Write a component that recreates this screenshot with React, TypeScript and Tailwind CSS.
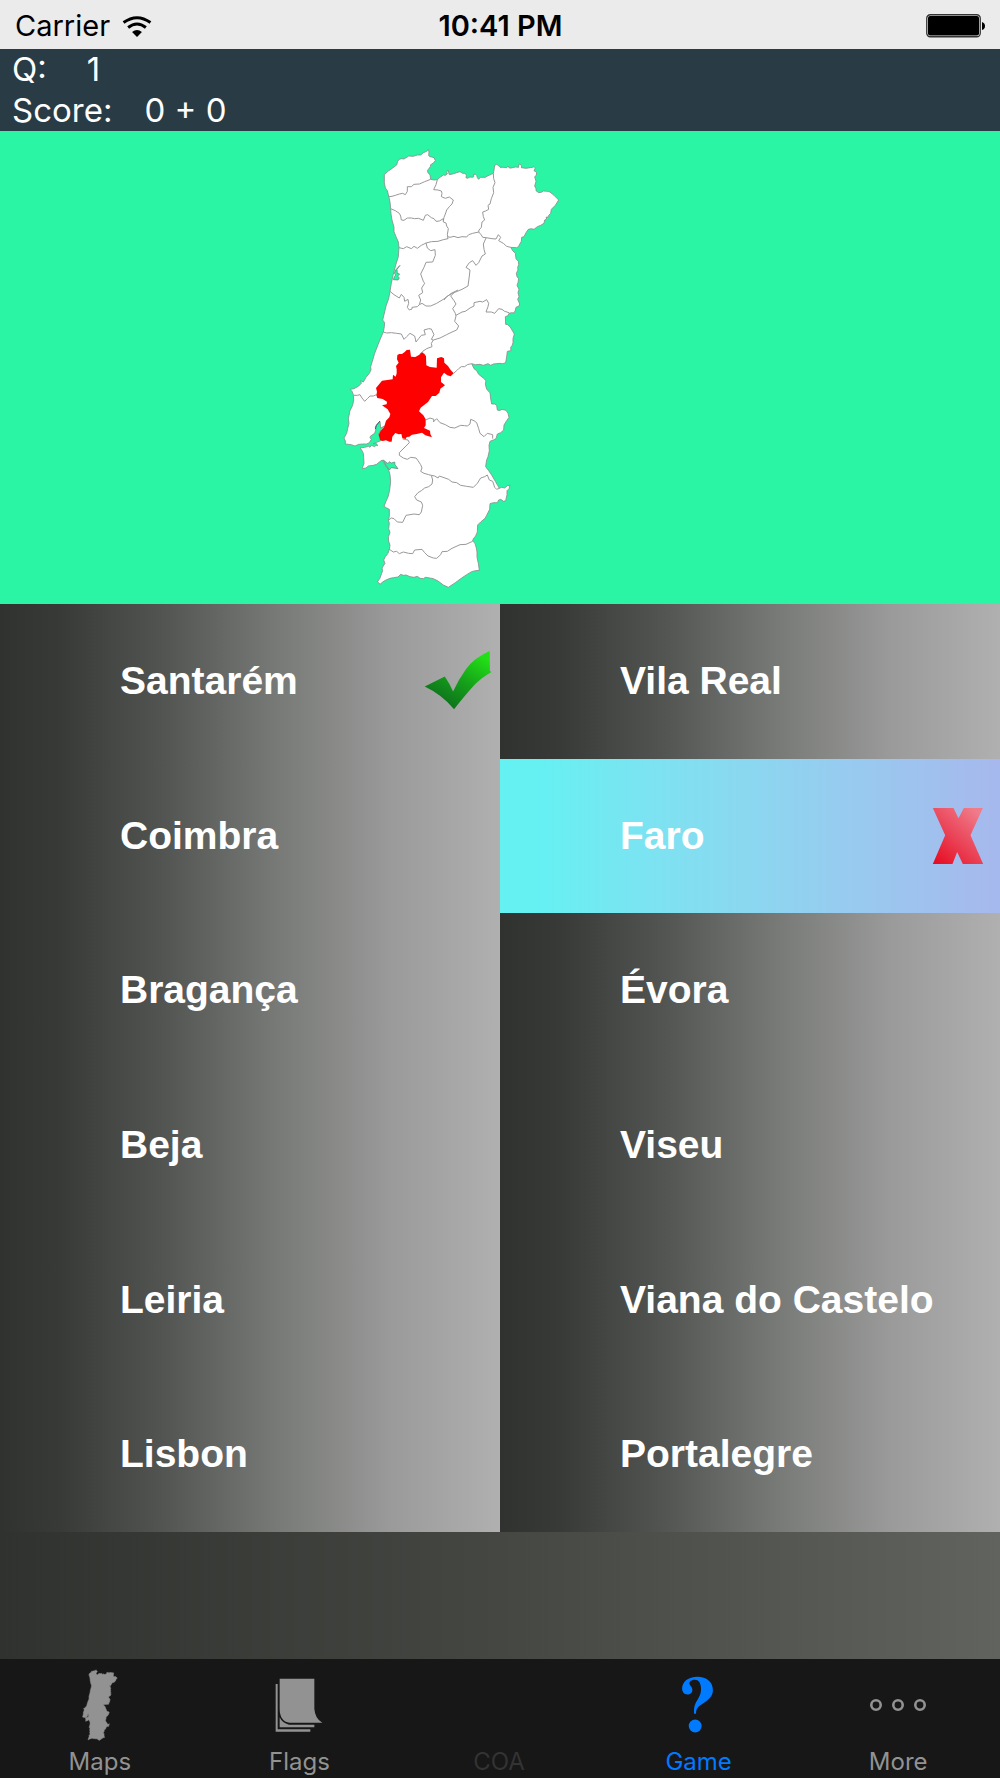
import { useState } from "react";
import clsx from "clsx";

interface Answer {
  name: string;
  mark?: "right" | "wrong";
}

// row by row, left column first
const answers: Answer[] = [
  { name: "Santarém", mark: "right" },
  { name: "Vila Real" },
  { name: "Coimbra" },
  { name: "Faro", mark: "wrong" },
  { name: "Bragança" },
  { name: "Évora" },
  { name: "Beja" },
  { name: "Viseu" },
  { name: "Leiria" },
  { name: "Viana do Castelo" },
  { name: "Lisbon" },
  { name: "Portalegre" },
];

const OUTLINE =
  "M163,104L175,93L188,84L200,75L203,64L208,58L214,56L222,57L236,48L250,49L262,45L272,45L280,38L290,34L295,28L297,36L296,46L299,50L306,51L312,53L316,62L309,70L302,74L301,80L292,92L295,100L300,104L302,118L312,120L322,119L330,112L340,105L346,106L352,102L350,96L354,90L356,98L358,104L368,102L380,98L390,95L398,100L406,100L409,106L408,113L412,115L420,111L428,112L432,109L430,103L437,103L440,106L442,113L446,118L451,112L456,112L466,112L474,107L484,103L490,100L492,90L494,76L500,73L506,77L510,82L522,82L530,83L534,78L538,84L544,84L556,81L566,82L566,74L570,72L575,78L574,83L588,85L600,83L608,82L612,80L616,84L612,92L620,97L619,106L614,110L618,124L614,138L618,146L618,152L626,158L634,157L640,153L652,154L660,156L672,166L686,180L676,196L664,208L662,220L656,226L657,230L648,232L650,237L644,240L642,250L632,256L622,260L612,268L604,266L595,268L588,278L582,290L575,292L574,304L565,320L560,323L542,322L548,332L556,340L558,356L565,364L566,374L563,382L564,390L559,400L561,410L566,416L564,428L561,436L567,448L564,458L567,470L563,478L569,492L567,498L558,502L556,511L552,519L545,518L537,520L534,527L526,530L527,553L533,554L540,560L546,570L553,582L549,596L549,608L546,617L542,622L543,632L532,634L530,650L527,668L518,671L510,670L490,672L482,676L474,671L460,676L450,673L436,674L425,671L432,686L440,692L446,703L460,714L468,722L466,732L470,748L480,758L482,776L485,792L494,792L500,796L502,810L508,812L516,808L528,811L534,820L537,832L530,842L522,855L521,870L512,878L502,882L498,896L490,900L480,904L477,916L478,932L474,950L470,960L468,972L467,980L476,992L485,1005L496,1024L508,1045L515,1042L524,1044L532,1037L540,1036L537,1046L531,1052L531,1064L527,1082L521,1084L512,1078L506,1080L502,1088L490,1088L480,1091L479,1108L470,1126L465,1135L452,1146L443,1155L442,1176L437,1188L430,1196L428,1203L435,1210L439,1224L441,1236L441,1252L445,1270L448,1291L436,1292L425,1295L410,1304L395,1314L376,1328L355,1342L340,1335L324,1323L310,1316L294,1313L286,1312L280,1316L270,1315L262,1309L252,1312L240,1310L228,1305L220,1306L212,1303L204,1311L190,1313L180,1315L166,1321L158,1326L150,1333L146,1328L142,1326L150,1314L155,1300L158,1292L156,1284L165,1270L161,1260L166,1250L174,1240L178,1228L180,1216L176,1204L175,1190L180,1178L176,1166L178,1150L175,1140L178,1130L178,1108L170,1104L162,1099L168,1084L175,1068L179,1050L182,1024L180,1004L176,990L166,976L157,960L148,966L140,973L130,976L115,978L108,984L97,986L99,978L102,970L101,952L100,940L95,930L90,924L104,922L116,919L120,922L124,916L134,920L138,916L143,917L140,911L130,911L140,907L150,903L157,900L146,884L148,878L154,868L164,858L152,864L150,845L142,852L136,862L138,868L134,880L122,888L120,893L124,898L118,908L110,912L98,912L86,913L75,918L64,914L46,912L46,903L42,894L50,880L53,866L57,850L55,836L60,812L68,796L71,780L70,764L66,754L60,748L72,746L86,738L94,730L92,722L100,726L108,712L118,700L123,690L122,680L127,664L134,640L144,614L152,594L160,576L163,560L164,548L158,540L162,524L168,498L176,476L180,454L184,430L190,402L198,372L205,350L207,322L205,306L198,290L192,275L192,262L186,240L183,222L182,205L180,186L176,168L172,152L166,144L163,128Z";

const SANTAREM =
  "M202,645L208,642L216,642L224,636L230,630L240,629L243,650L256,651L268,644L274,637L283,641L288,649L289,676L300,681L320,683L321,655L334,651L342,655L343,668L354,678L362,690L371,700L362,709L352,706L342,698L333,712L333,726L345,736L331,746L328,758L317,768L306,768L294,786L272,803L267,814L280,826L287,838L287,856L282,864L300,872L301,882L306,892L286,886L276,878L260,882L246,884L238,890L230,891L227,897L217,895L214,882L206,883L196,879L187,890L185,905L178,905L168,901L158,903L150,900L146,884L152,872L162,862L168,842L178,832L181,822L173,808L156,796L170,793L171,785L158,777L142,774L139,766L141,755L138,744L156,722L188,718L189,704L197,710L200,700L200,688L198,678L206,668L201,658Z";

const BORDERS = [
  "M176,170L186,169L196,166L208,162L218,160L226,164L232,154L232,140L244,140L252,133L268,132L284,125L302,118",
  "M322,119L318,134L311,149L324,150L334,153L336,160L334,170L346,175L358,171L370,180L366,192L358,200L350,210L346,222L342,232L340,243",
  "M182,206L196,212L208,220L212,228L214,240L222,241L232,234L244,234L254,236L266,235L280,241L286,226L293,224L304,233L312,236L318,244L328,243L340,236L340,246L348,249L350,258L355,266L352,284L354,297",
  "M490,100L491,116L495,128L489,142L491,158L484,176L480,192L474,196L476,208L467,213L458,216L460,230L464,240L456,246L454,262L447,270L446,277",
  "M354,290L360,292L372,289L384,293L396,290L410,291L416,284L428,280L446,276L454,285L458,292L468,293L486,296L498,297L505,284L512,292L506,302L520,310L530,319L542,322",
  "M207,323L220,326L230,320L244,326L252,319L262,325L274,316L288,309L304,305L324,304L340,299L354,296",
  "M288,309L292,324L302,332L315,329L316,346L308,366L288,367L282,382L272,402L280,424L284,430L275,444L278,458L266,466L272,480L268,494",
  "M468,294L460,312L462,328L466,342L456,348L446,368L438,376L428,362L418,368L408,382L420,390L418,408L414,438L396,448L382,454L366,460L350,470L342,480",
  "M180,454L192,464L208,474L214,463L222,472L224,484L234,478L236,490L232,502L238,510L246,507L246,502L262,500L268,494L276,490L288,498L302,498L320,490L340,478L364,460L384,450",
  "M372,458L362,468L372,482L378,492L368,506L376,520L378,528L374,544L386,558L380,570L366,576L350,584L330,594L310,600L304,598L312,584L304,567L296,566L282,570L286,584L274,586L266,596L258,606L254,588L240,580L230,590L222,598L214,582L200,580L184,578L170,579L160,576",
  "M378,526L396,516L406,514L420,504L432,498L432,488L450,484L458,486L470,479L476,490L474,500L468,516L484,516L494,520L506,506L516,508L524,514L537,518",
  "M310,600L304,610L306,620L290,626L278,634L278,640",
  "M371,700L380,692L386,686L394,680L404,680L412,674L425,671",
  "M71,766L82,766L90,764L96,774L104,784L112,776L120,768L130,768L139,764",
  "M287,840L300,834L312,838L310,846L320,836L330,848L346,854L360,862L374,864L392,856L404,857L412,858L420,852L422,838L432,842L440,848L446,866L450,880L462,890L472,880L488,884L488,896",
  "M218,897L234,900L238,908L222,924L208,938L208,946L220,954L232,958L242,952L258,954L264,962L272,974L276,984L272,994L282,1000L296,1004L304,1006L308,1020L306,1032L296,1040L284,1044L274,1052L264,1058L254,1070L260,1080L274,1086L278,1096L274,1116L268,1124L252,1122L228,1126L218,1147L202,1146L192,1136L184,1134L176,1140",
  "M304,1006L314,1008L324,1014L328,1008L342,1013L356,1018L366,1026L380,1028L392,1036L410,1039L430,1042L442,1030L452,1014L464,1010L472,1005L478,1020L488,1024L494,1042L500,1048L508,1045",
  "M178,1228L190,1236L200,1234L208,1241L220,1236L236,1240L248,1241L254,1230L276,1228L284,1238L294,1248L310,1254L320,1255L332,1244L336,1235L352,1234L366,1225L390,1214L408,1213L428,1204",
];

// Aveiro lagoon, then the Sado estuary
const WATER = [
  "M210,376L201,388L202,400L209,402L203,408L208,414L204,420L190,419L193,410L197,405L193,400L197,390Z",
  "M160,960L174,971L178,965L184,969L194,966L195,974L204,986L184,983L178,990L168,976Z",
];

const DistrictMap = () => (
  <svg viewBox="30 18 672 1332" className="h-[444px] w-[224px]" role="img" aria-label="Portugal">
    <path d={OUTLINE} fill="#fff" stroke="#84908a" strokeWidth="2.5" strokeLinejoin="round" />
    <g fill="none" stroke="#999" strokeWidth="3" strokeLinejoin="round">
      {BORDERS.map((d) => (
        <path key={d} d={d} />
      ))}
    </g>
    <path d={SANTAREM} fill="#f00" />
    {WATER.map((d) => (
      <path key={d} d={d} fill="#29f5a5" stroke="#5d7a70" strokeWidth="2" />
    ))}
    <path d="M150,843L139,856L136,868" fill="none" stroke="#456" strokeWidth="3" />
  </svg>
);

const CheckMark = () => (
  <svg viewBox="22 31 204 182" className="h-[60px] w-[68px]" role="img" aria-label="Correct">
    <defs>
      <linearGradient id="check" x1="0.35" y1="1" x2="0.95" y2="0.15">
        <stop offset="0" stopColor="#0c6f1c" />
        <stop offset="0.5" stopColor="#16a01a" />
        <stop offset="1" stopColor="#22e016" />
      </linearGradient>
    </defs>
    <path d="M23,139L84,108Q98,128 109,154Q125,118 148,86Q175,50 220,31L221,92L226,95Q190,114 162,147Q130,184 112,208Q76,164 23,139Z" fill="url(#check)" />
  </svg>
);

const CrossMark = () => (
  <svg viewBox="36 39 153 168" className="h-14 w-[68px]" role="img" aria-label="Wrong">
    <defs>
      <linearGradient id="cross" x1="0" y1="1" x2="0.8" y2="0">
        <stop offset="0" stopColor="#e6081e" />
        <stop offset="0.5" stopColor="#ea4357" />
        <stop offset="1" stopColor="#f07c8a" />
      </linearGradient>
    </defs>
    <path d="M37,39H99L114,70L130,39H187L150,121L188,207H127L110,171L96,207H37L74,121Z" fill="url(#cross)" />
  </svg>
);

const WifiIcon = () => (
  <svg viewBox="0 0 90 64" className="h-[21px] w-[30px]" aria-hidden="true">
    <g fill="none" stroke="#000" strokeWidth="9">
      <path d="M4,20Q45,-10 86,20" />
      <path d="M18,35Q45,14 72,35" />
    </g>
    <path d="M30,49Q45,37 60,49L45,64Z" />
  </svg>
);

const BatteryIcon = () => (
  <svg viewBox="0 0 60 24" className="h-6 w-[60px]" aria-hidden="true">
    <rect x="0.75" y="0.75" width="53.5" height="22" rx="3.5" fill="#ebebeb" stroke="#333" strokeWidth="1.3" />
    <rect x="2" y="2" width="51" height="19.5" rx="2" />
    <path d="M56,8Q59,9 59,12Q59,15 56,16Z" />
  </svg>
);

const MapsIcon = () => (
  <svg viewBox="30 18 672 1332" className="h-18 w-9" aria-hidden="true">
    <path d={OUTLINE} fill="currentColor" stroke="currentColor" strokeWidth="12" />
  </svg>
);

const FlagsIcon = () => (
  <svg viewBox="0 0 144 162" className="h-[54px] w-12" aria-hidden="true" fill="currentColor">
    <path d="M14,2H118V92Q120,122 142,134H44Q14,130 14,92Z" />
    <path d="M14,118Q22,136 42,140H118V148H14Z" />
    <path d="M2,18H8V154H106V161H2Z" />
  </svg>
);

const GameIcon = () => (
  <svg viewBox="68 46 96 172" className="h-[57px] w-8 overflow-visible" aria-hidden="true" fill="currentColor">
    <path d="M101,160C100,138 104,130 112,117C120,104 122,98 122,84C122,67 115,57 103,57C94,57 87,62 87,68C87,75 96,78 96,88C96,96 89,102 81,102C71,102 65,94 65,84C65,63 84,48 111,48C139,48 158,64 158,88C158,108 144,118 129,128C113,138 107,143 107,160Z" />
    <circle cx="104.500" cy="197" r="19.500" />
  </svg>
);

const MoreIcon = () => (
  <svg viewBox="0 0 56 12" className="h-3 w-14" aria-hidden="true" fill="none" stroke="currentColor" strokeWidth="2.6">
    <circle cx="6" cy="6" r="4.700" />
    <circle cx="28" cy="6" r="4.700" />
    <circle cx="50" cy="6" r="4.700" />
  </svg>
);

const tabs = [
  { label: "Maps", icon: <MapsIcon /> },
  { label: "Flags", icon: <FlagsIcon /> },
  { label: "COA", disabled: true },
  { label: "Game", icon: <GameIcon /> },
  { label: "More", icon: <MoreIcon /> },
];

const App = () => {
  const [tab, setTab] = useState("Game");

  return (
    <div className="flex min-h-screen flex-col bg-linear-to-r from-[#30322f] via-[#454743] to-[#61635f] font-['Inter',sans-serif]">
      <div className="grid grid-cols-3 items-center bg-[#ebebeb] pt-1 pr-3.5 pb-px pl-[15px] text-[29px] leading-[44px] text-black">
        <div className="flex items-center gap-3">
          <span>Carrier</span>
          <WifiIcon />
        </div>
        <time className="text-center font-semibold">10:41 PM</time>
        <div className="flex justify-end">
          <BatteryIcon />
        </div>
      </div>

      <header className="bg-[#293c46] px-3 text-[33px] leading-[41px] text-white">
        <p className="flex gap-10">
          <span>Q:</span>
          <span>1</span>
        </p>
        <p className="flex gap-8">
          <span>Score:</span>
          <span>0 + 0</span>
        </p>
      </header>

      <section className="bg-[#29f5a5] pt-[15px] pb-3.5 pl-[34%]">
        <DistrictMap />
      </section>

      <main className="grid flex-1 auto-rows-fr grid-cols-2 font-['Liberation_Sans',sans-serif]">
        {answers.map(({ name, mark }) => (
          <button
            key={name}
            type="button"
            className={clsx(
              "flex items-center justify-between pr-2 pl-[24%] text-left text-[39px] font-bold text-white",
              mark === "wrong"
                ? "bg-linear-to-r from-[#65f0f2] from-8% to-[#a6b8ed]"
                : "bg-[linear-gradient(to_right,#30322f,#383a37_12%,#535552_33%,#777976_55%,#999a99_78%,#b0b0b0)]"
            )}
          >
            {name}
            {mark === "right" && <CheckMark />}
            {mark === "wrong" && <CrossMark />}
          </button>
        ))}
      </main>

      <nav className="mt-[127px] grid grid-cols-5 bg-[#171717] pr-0.5 pb-0.5">
        {tabs.map(({ label, icon, disabled }) => (
          <button
            key={label}
            type="button"
            disabled={disabled}
            onClick={() => setTab(label)}
            className={clsx(
              "flex flex-col items-center text-2xl",
              disabled ? "text-[#333]" : tab === label ? "text-[#007aff]" : "text-[#929292]"
            )}
          >
            <span className="flex h-[89px] items-center pt-0.5">{icon}</span>
            <span className="leading-7">{label}</span>
          </button>
        ))}
      </nav>
    </div>
  );
};

export default App;
